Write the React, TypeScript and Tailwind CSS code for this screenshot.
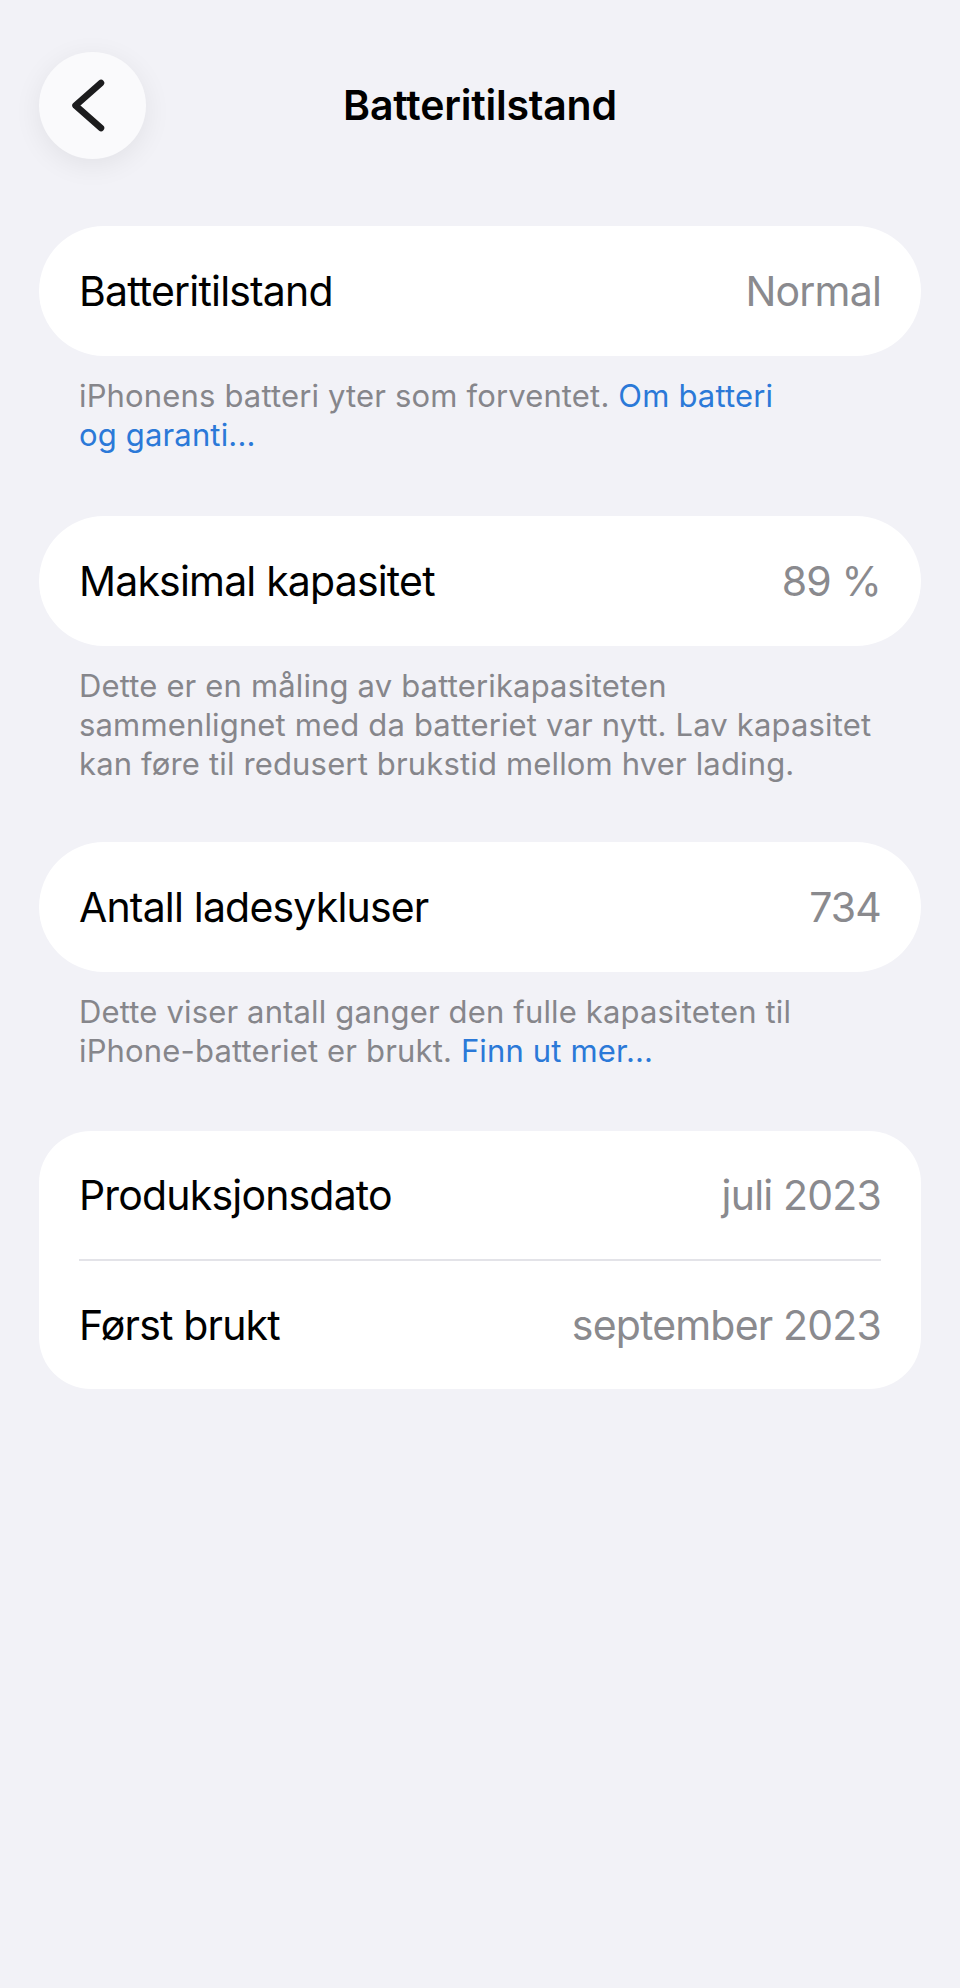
import { FC, ReactNode } from "react";

const font = { fontFamily: "Inter, 'Noto Sans', sans-serif" };

interface RowProps {
  label: string;
  value: string;
}

const Row: FC<RowProps> = ({ label, value }) => (
  <div className="flex h-[128px] items-center justify-between">
    <span className="text-[41px] leading-none tracking-[-0.02em] text-black">{label}</span>
    <span className="text-[41px] leading-none tracking-[-0.02em] text-[#8a8a8e]">{value}</span>
  </div>
);

const Card: FC<RowProps> = ({ label, value }) => (
  <div className="flex h-[130px] items-center justify-between rounded-full bg-white px-[40px]">
    <span className="text-[41px] leading-none tracking-[-0.02em] text-black">{label}</span>
    <span className="text-[41px] leading-none tracking-[-0.02em] text-[#8a8a8e]">{value}</span>
  </div>
);

const Footer: FC<{ children: ReactNode }> = ({ children }) => (
  <p className="mt-[20px] px-[40px] text-[31px] leading-[39px] tracking-[0.005em] text-[#86868b]">
    {children}
  </p>
);

const Link: FC<{ children: ReactNode }> = ({ children }) => (
  <span className="text-[#2b79d8]">{children}</span>
);

const App: FC = () => {
  return (
    <div className="min-h-[1988px] w-full bg-[#f2f2f7] px-[39px]" style={font}>
      {/* header */}
      <div className="grid grid-cols-[107px_1fr_107px] items-center pt-[52px]">
        <button className="flex h-[107px] w-[107px] items-center justify-center rounded-full bg-[#fafafc] shadow-[0_6px_28px_rgba(0,0,0,0.07)]">
          <svg width="107" height="107" viewBox="0 0 107 107" fill="none">
            <path
              d="M62 31 L36.5 53.5 L62 76"
              stroke="#1c1c1e"
              strokeWidth="6.5"
              strokeLinecap="round"
              strokeLinejoin="round"
            />
          </svg>
        </button>
        <h1 className="text-center text-[41px] font-semibold leading-none tracking-[-0.005em] text-black">
          Batteritilstand
        </h1>
        <div />
      </div>

      <div className="mt-[67px]">
        <Card label="Batteritilstand" value="Normal" />
        <Footer>
          iPhonens batteri yter som forventet. <Link>Om batteri</Link>
          <br />
          <Link>og garanti...</Link>
        </Footer>
      </div>

      <div className="mt-[62px]">
        <Card label="Maksimal kapasitet" value="89 %" />
        <Footer>
          Dette er en måling av batterikapasiteten
          <br />
          sammenlignet med da batteriet var nytt. Lav kapasitet
          <br />
          kan føre til redusert brukstid mellom hver lading.
        </Footer>
      </div>

      <div className="mt-[59px]">
        <Card label="Antall ladesykluser" value="734" />
        <Footer>
          Dette viser antall ganger den fulle kapasiteten til
          <br />
          iPhone-batteriet er brukt. <Link>Finn ut mer...</Link>
        </Footer>
      </div>

      <div className="mt-[61px] rounded-[52px] bg-white px-[40px]">
        <Row label="Produksjonsdato" value="juli 2023" />
        <div className="h-[2px] bg-[#e3e3e8]" />
        <Row label="Først brukt" value="september 2023" />
      </div>
    </div>
  );
};

export default App;
